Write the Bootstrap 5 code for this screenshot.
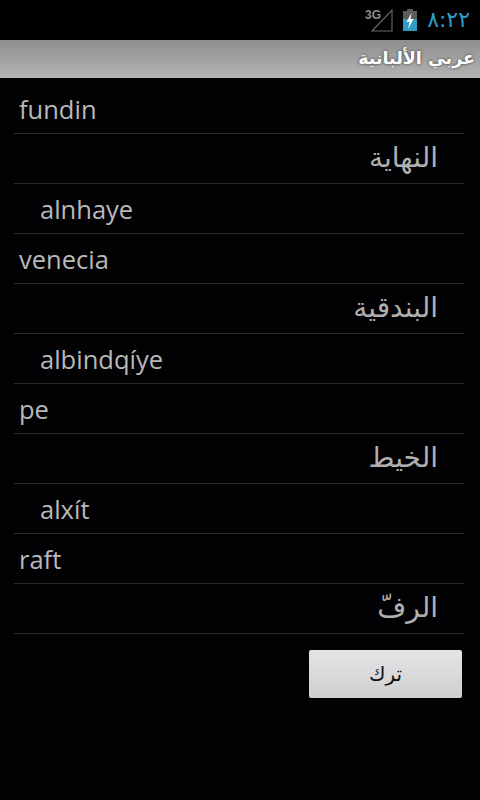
<!DOCTYPE html>
<html lang="ar">
<head>
<meta charset="utf-8">
<title>عربي الألبانية</title>
<link rel="stylesheet" href="https://cdn.jsdelivr.net/npm/bootstrap@5.3.0/dist/css/bootstrap.min.css">
<style>
html,body{height:100%;}
body{background:#020204;width:480px;height:800px;overflow:hidden;font-family:"Open Sans","DejaVu Sans",sans-serif;}
.sbar{height:40px;background:#000;padding-right:10px;gap:9px;}
.sig{font:bold 12px/1 "Liberation Sans",sans-serif;color:#8a8a8a;margin-right:-10px;margin-top:1px;}
.clock{font:22px/1 "DejaVu Sans",sans-serif;color:#2f9cc4;letter-spacing:1px;}
.tbar{height:38px;background:linear-gradient(#8f8f8f,#b4b4b4);padding-right:5px;color:#fff;font:bold 17.5px/1 "DejaVu Sans",sans-serif;text-shadow:0 0 3px #333;}
.wlist{padding:6px 16px 0 14px;}
.wrow{height:50px;border-bottom:1px solid #2b2b2e;color:#b9b9b9;font-size:25.5px;line-height:1;padding-left:5px;padding-bottom:11px;}
.wrow.tr{padding-left:26px;}
.wrow.ar{font-family:"DejaVu Sans",sans-serif;font-size:28px;color:#b0b0b0;padding-right:26px;padding-left:0;padding-bottom:11px;}
.quit{width:153px;height:48px;background:linear-gradient(#e4e4e6,#cfcfd1);border:0;border-radius:2px;color:#111;font:20px/1 "DejaVu Sans",sans-serif;padding:0;}
.quit:hover,.quit:active{background:#d8d8da;color:#111;}
.qwrap{padding:16px 18px 0 0;}
</style>
</head>
<body>
<div class="sbar d-flex align-items-center justify-content-end">
  <span class="d-flex align-items-start">
    <span class="sig">3G</span>
    <svg width="22" height="24" viewBox="0 0 22 24"><path d="M1 23 L21 2 V23 Z" fill="none" stroke="#6a6a6a" stroke-width="1.1"/></svg>
  </span>
  <svg width="16" height="24" viewBox="0 0 16 24"><rect x="5" y="1" width="6" height="3" fill="#555"/><rect x="1" y="3" width="14" height="9" fill="#5c5c5c"/><rect x="1" y="11" width="14" height="12" fill="#2f9cc4"/><path d="M9.5 5 L4.5 14 H7.5 L6 21 L11.5 11 H8.5 Z" fill="#fff"/></svg>
  <span class="clock">٨:٢٢</span>
</div>
<div class="tbar d-flex align-items-center justify-content-start" dir="rtl"><span>عربي الألبانية</span></div>
<div class="wlist">
  <div class="wrow d-flex align-items-end">fundin</div>
  <div class="wrow ar d-flex align-items-end justify-content-end">النهاية</div>
  <div class="wrow tr d-flex align-items-end">alnhaye</div>
  <div class="wrow d-flex align-items-end">venecia</div>
  <div class="wrow ar d-flex align-items-end justify-content-end">البندقية</div>
  <div class="wrow tr d-flex align-items-end">albindqíye</div>
  <div class="wrow d-flex align-items-end">pe</div>
  <div class="wrow ar d-flex align-items-end justify-content-end">الخيط</div>
  <div class="wrow tr d-flex align-items-end">alxít</div>
  <div class="wrow d-flex align-items-end">raft</div>
  <div class="wrow ar d-flex align-items-end justify-content-end">الرفّ</div>
</div>
<div class="qwrap d-flex justify-content-end">
  <button type="button" class="btn quit">ترك</button>
</div>
<script src="https://cdn.jsdelivr.net/npm/bootstrap@5.3.0/dist/js/bootstrap.bundle.min.js"></script>
</body>
</html>
